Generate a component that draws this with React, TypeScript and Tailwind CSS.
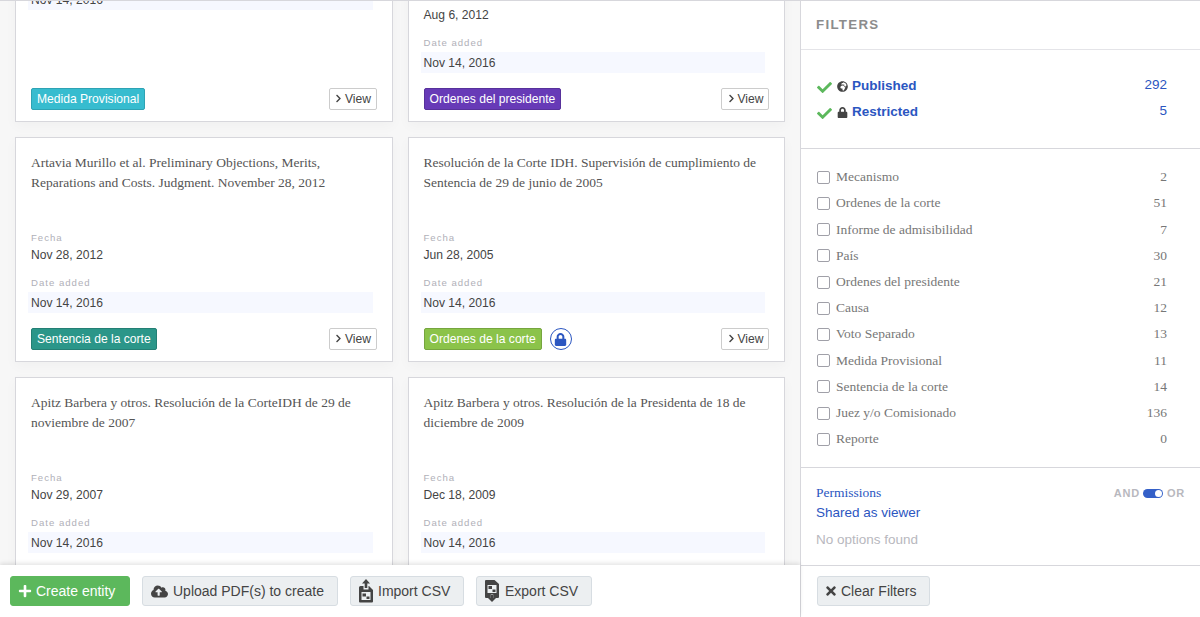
import { FaCheck, FaGlobeAfrica, FaLock, FaPlus, FaCloudUploadAlt, FaTimes, FaChevronRight } from 'react-icons/fa';

const CARDS = [
  { title: '', fecha: '', added: 'Nov 14, 2016', badge: 'Medida Provisional', color: 'bg-[#37bccf] border-[#2ea3b4]', short: true },
  { title: '', fecha: 'Aug 6, 2012', added: 'Nov 14, 2016', badge: 'Ordenes del presidente', color: 'bg-[#673ab7] border-[#57319b]' },
  { title: 'Artavia Murillo et al. Preliminary Objections, Merits, Reparations and Costs. Judgment. November 28, 2012', fecha: 'Nov 28, 2012', added: 'Nov 14, 2016', badge: 'Sentencia de la corte', color: 'bg-[#2b9689] border-[#247f74]' },
  { title: 'Resolución de la Corte IDH. Supervisión de cumplimiento de Sentencia de 29 de junio de 2005', fecha: 'Jun 28, 2005', added: 'Nov 14, 2016', badge: 'Ordenes de la corte', color: 'bg-[#8bc34a] border-[#76a53f]', locked: true },
  { title: 'Apitz Barbera y otros. Resolución de la CorteIDH de 29 de noviembre de 2007', fecha: 'Nov 29, 2007', added: 'Nov 14, 2016', badge: '', color: '' },
  { title: 'Apitz Barbera y otros. Resolución de la Presidenta de 18 de diciembre de 2009', fecha: 'Dec 18, 2009', added: 'Nov 14, 2016', badge: '', color: '' },
];

const FILTERS = [
  ['Mecanismo', 2],
  ['Ordenes de la corte', 51],
  ['Informe de admisibilidad', 7],
  ['País', 30],
  ['Ordenes del presidente', 21],
  ['Causa', 12],
  ['Voto Separado', 13],
  ['Medida Provisional', 11],
  ['Sentencia de la corte', 14],
  ['Juez y/o Comisionado', 136],
  ['Reporte', 0],
];

function ImportIcon() {
  return (
    <svg width="14" height="25" viewBox="0 0 14 25" fill="#444" className="shrink-0">
      <path d="M7 0l4 4.500H8.300V9H5.700V4.500H3z" />
      <path fillRule="evenodd" d="M1.500 7H4.500v3.500h5V7h.5L14 11v11.500a1 1 0 0 1-1 1H1a1 1 0 0 1-1-1V8.500A1.500 1.500 0 0 1 1.500 7zM2.500 13v8h9v-8z" />
      <path d="M3.500 14.500h3.500v3H3.500zM7.500 17.500h3v2.500h-3z" />
    </svg>
  );
}

function ExportIcon() {
  return (
    <svg width="14" height="22" viewBox="0 0 14 22" fill="#444" className="shrink-0">
      <path fillRule="evenodd" d="M1 0h8.500L14 4v13a1 1 0 0 1-1 1H8.300v-3.500H5.700V18H1a1 1 0 0 1-1-1V1a1 1 0 0 1 1-1zM2.500 5v8h9V5z" />
      <path d="M3.500 6h3.500v3H3.500zM7.500 9.500h3V12h-3z" />
      <path d="M5.700 15h2.600v3h2.700L7 22l-4-4h2.700z" />
    </svg>
  );
}

function Card({ card }: { card: (typeof CARDS)[number] }) {
  return (
    <div className="flex h-[225px] flex-col border border-[#d7d7dc] bg-white px-[15px] pt-[15px] pb-[11px] shadow-[0_4px_12px_rgba(0,0,0,0.03)]">
      <div className={`${card.short ? 'h-[30px]' : 'h-[40px]'} font-['Liberation_Serif',serif] text-[13.5px] leading-[20px] text-[#555]`}>{card.title}</div>
      {card.fecha && (
        <div className="mt-[39px] h-[45px]">
          <div className="text-[9.6px] leading-[12px] tracking-[1px] text-[#b0b0b8]">Fecha</div>
          <div className="mt-[2px] text-[12.1px] leading-[18px] text-[#444]">{card.fecha}</div>
        </div>
      )}
      <div className={card.short ? 'mt-[31px]' : ''}>
        <div className="text-[9.6px] leading-[12px] tracking-[1px] text-[#b0b0b8]">Date added</div>
        <div className="mt-[3px] mr-[4px] -ml-[3px] h-[21px] bg-[#f6f8ff] pl-[3px] text-[12.1px] leading-[23px] text-[#444]">{card.added}</div>
      </div>
      <div className="mt-auto flex h-[22px] items-center">
        {card.badge && (
          <span className={`flex h-[22px] items-center rounded-[2px] border px-[5px] text-[12.1px] text-white ${card.color}`}>{card.badge}</span>
        )}
        {card.locked && (
          <span className="ml-[8px] flex h-[22px] w-[22px] items-center justify-center rounded-full border border-[#2b56c1] text-[#2b56c1]">
            <FaLock size={13} />
          </span>
        )}
        {card.badge && (
          <button className="ml-auto flex h-[22px] w-[48px] items-center justify-center gap-[2px] rounded-[2px] border border-[#ccc] bg-white text-[12.1px] text-[#444]">
            <FaChevronRight size={9} className="-translate-y-px" />
            View
          </button>
        )}
      </div>
    </div>
  );
}

export default function App() {
  return (
    <div className="flex h-[617px] w-[1200px] overflow-hidden border-t border-[#d7d7dc] bg-white font-['Liberation_Sans',sans-serif]">
      <main className="flex min-w-0 flex-1 flex-col">
        <div className="flex-1 overflow-hidden bg-[#f7f7f7]">
          <div className="-mt-[104px] grid grid-cols-2 gap-[15px] px-[15px]">
            {CARDS.map((card, i) => (
              <Card key={i} card={card} />
            ))}
          </div>
        </div>
        <div className="relative flex h-[52px] shrink-0 items-center gap-[12px] bg-white pl-[10px] shadow-[0_-2px_4px_rgba(0,0,0,0.1)]">
          <button className="flex h-[30px] w-[120px] items-center gap-[4px] rounded-[3px] border border-[#5cb85c] bg-[#5cb85c] pl-[7px] text-[14px] text-white">
            <FaPlus size={14} />
            Create entity
          </button>
          <button className="flex h-[30px] w-[196px] items-center gap-[5px] rounded-[3px] border border-[#d7dde2] bg-[#eceff1] pl-[8px] text-[14px] text-[#444]">
            <FaCloudUploadAlt size={17} />
            Upload PDF(s) to create
          </button>
          <button className="flex h-[30px] w-[114px] items-center gap-[5px] rounded-[3px] border border-[#d7dde2] bg-[#eceff1] pl-[8px] text-[14px] text-[#444]">
            <ImportIcon />
            Import CSV
          </button>
          <button className="flex h-[30px] w-[116px] items-center gap-[6px] rounded-[3px] border border-[#d7dde2] bg-[#eceff1] pl-[8px] text-[14px] text-[#444]">
            <ExportIcon />
            Export CSV
          </button>
        </div>
      </main>

      <aside className="flex w-[400px] shrink-0 flex-col border-l border-[#d7d7dc] bg-white">
        <div className="flex h-[49px] shrink-0 items-center border-b border-[#e4e4e8] pl-[15px] text-[13.3px] font-bold tracking-[1.3px] text-[#8c8c8c]">FILTERS</div>
        <div className="flex h-[99px] shrink-0 flex-col justify-center gap-[6px] border-b border-[#d7d7dc] pr-[33px] pl-[16px]">
          {[
            ['Published', 292, <FaGlobeAfrica key="g" size={11} />],
            ['Restricted', 5, <FaLock key="l" size={11} />],
          ].map(([label, count, icon]) => (
            <div key={label as string} className="flex h-[20px] items-center text-[13.5px] text-[#2b56c1]">
              <FaCheck size={15} className="translate-y-px text-[#5cb85c]" />
              <span className="ml-[4px] flex w-[12px] justify-center text-[#444]">{icon}</span>
              <span className="ml-[4px] font-bold">{label}</span>
              <span className="ml-auto -translate-y-px">{count}</span>
            </div>
          ))}
        </div>
        <div className="flex h-[319px] shrink-0 flex-col border-b border-[#d7d7dc] pt-[15.3px] pr-[33px] pl-[16px]">
          {FILTERS.map(([label, count]) => (
            <div key={label} className="flex h-[26.2px] items-center font-['Liberation_Serif',serif] text-[13.5px] text-[#777]">
              <span className="h-[13px] w-[13px] rounded-[2px] border border-[#a0a0a8] bg-white" />
              <span className="ml-[6px]">{label}</span>
              <span className="ml-auto">{count}</span>
            </div>
          ))}
        </div>
        <div className="h-[98px] shrink-0 border-b border-[#d7d7dc] pt-[15px] pr-[15px] pl-[15px]">
          <div className="flex h-[20px] items-center">
            <span className="font-['Liberation_Serif',serif] text-[13.5px] text-[#2b56c1]">Permissions</span>
            <span className="ml-auto text-[11px] font-bold tracking-[0.8px] text-[#b8b8be]">AND</span>
            <span className="ml-[3px] flex h-[9px] w-[20px] items-center justify-end rounded-full bg-[#3460c8] pr-[1px]">
              <span className="h-[7px] w-[7px] rounded-full bg-white" />
            </span>
            <span className="ml-[4px] text-[11px] font-bold tracking-[0.8px] text-[#b8b8be]">OR</span>
          </div>
          <div className="text-[13.5px] leading-[20px] text-[#2b56c1]">Shared as viewer</div>
          <div className="mt-[7px] text-[13.5px] leading-[20px] text-[#b8b8be]">No options found</div>
        </div>
        <div className="flex flex-1 items-center pb-[1px] pl-[16px]">
          <button className="flex h-[30px] w-[113px] items-center gap-[3px] rounded-[3px] border border-[#d7dde2] bg-[#eceff1] pl-[6px] text-[14px] text-[#444]">
            <FaTimes size={14} />
            Clear Filters
          </button>
        </div>
      </aside>
    </div>
  );
}
